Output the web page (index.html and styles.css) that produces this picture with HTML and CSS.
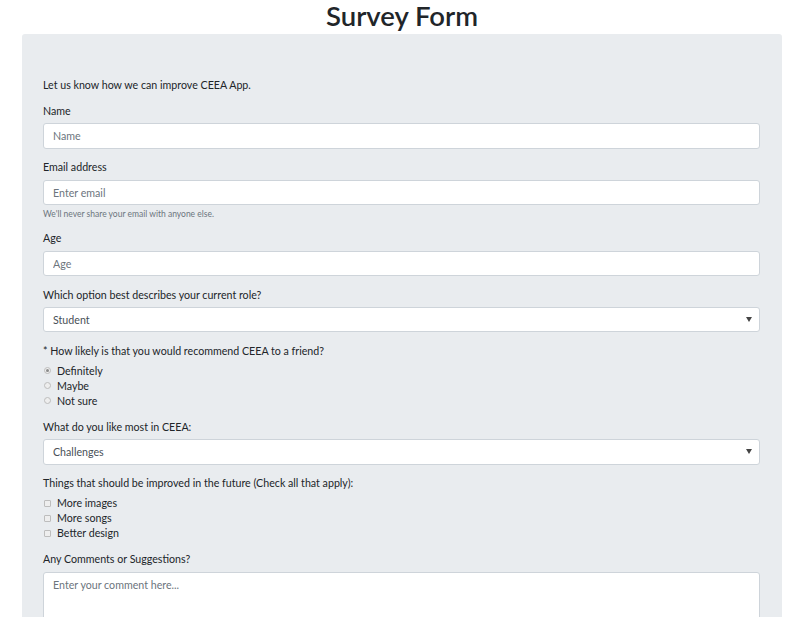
FILE: index.html
```html
<!DOCTYPE html>
<html lang="en">
<head>
<meta charset="utf-8">
<title>Survey Form</title>
<link rel="stylesheet" href="styles.css">
</head>
<body>
<h1 class="title">Survey Form</h1>
<div class="jumbotron">
  <form class="survey">
    <p class="intro">Let us know how we can improve CEEA App.</p>
    <div class="group">
      <label class="lbl" for="name">Name</label>
      <input class="control" id="name" type="text" placeholder="Name">
    </div>
    <div class="group">
      <label class="lbl" for="email">Email address</label>
      <input class="control" id="email" type="email" placeholder="Enter email">
      <small class="help">We'll never share your email with anyone else.</small>
    </div>
    <div class="group">
      <label class="lbl" for="age">Age</label>
      <input class="control" id="age" type="number" placeholder="Age">
    </div>
    <div class="group">
      <label class="lbl" for="role">Which option best describes your current role?</label>
      <div class="select">
        <select class="control" id="role"><option>Student</option></select>
      </div>
    </div>
    <div class="group">
      <label class="lbl">* How likely is that you would recommend CEEA to a friend?</label>
      <div class="checks">
        <label class="check"><input type="radio" name="rec" class="radio" checked><span>Definitely</span></label>
        <label class="check"><input type="radio" name="rec" class="radio"><span>Maybe</span></label>
        <label class="check"><input type="radio" name="rec" class="radio"><span>Not sure</span></label>
      </div>
    </div>
    <div class="group">
      <label class="lbl" for="like">What do you like most in CEEA:</label>
      <div class="select">
        <select class="control" id="like"><option>Challenges</option></select>
      </div>
    </div>
    <div class="group">
      <label class="lbl">Things that should be improved in the future (Check all that apply):</label>
      <div class="checks">
        <label class="check"><input type="checkbox" class="box"><span>More images</span></label>
        <label class="check"><input type="checkbox" class="box"><span>More songs</span></label>
        <label class="check"><input type="checkbox" class="box"><span>Better design</span></label>
      </div>
    </div>
    <div class="group">
      <label class="lbl" for="comment">Any Comments or Suggestions?</label>
      <textarea class="control area" id="comment" placeholder="Enter your comment here..."></textarea>
    </div>
  </form>
</div>
</body>
</html>
```

FILE: styles.css
```css
* { box-sizing: border-box; }
html, body { margin: 0; padding: 0; }
body {
  font-family: "Lato", "Open Sans", sans-serif;
  font-size: 10.67px;
  line-height: 16px;
  color: #212529;
  background: #fff;
  overflow: hidden;
  height: 617px;
}
.title {
  margin: 0 0 2px;
  font-size: 27.5px;
  line-height: 32px;
  font-weight: 600;
  text-align: center;
  color: #212529;
}
.jumbotron {
  margin: 0 22px;
  background: #e9ecef;
  border-radius: 3px;
  padding: 43px 22px 40px 21px;
}
.intro { margin: 0 0 10px; }
.group { margin-bottom: 10.67px; display: flex; flex-direction: column; }
.lbl { display: block; margin-bottom: 4.33px; }
.control {
  display: block;
  width: 100%;
  height: 25.33px;
  padding: 0 9px;
  font-family: inherit;
  font-size: 10.67px;
  color: #495057;
  background: #fff;
  border: 1px solid #ced4da;
  border-radius: 3px;
  outline: none;
}
.control::placeholder { color: #6c757d; opacity: 1; }
.help {
  display: block;
  margin-top: 2.67px;
  font-size: 8.5px;
  line-height: 12px;
  color: #6c757d;
}
.select { position: relative; }
.select select { appearance: none; -webkit-appearance: none; }
.select::after {
  content: "";
  position: absolute;
  right: 8px;
  top: 10px;
  border-left: 3px solid transparent;
  border-right: 3px solid transparent;
  border-top: 5px solid #444;
}
.checks { display: flex; flex-direction: column; }
.check {
  display: flex;
  align-items: center;
  height: 15px;
  padding-left: 1px;
}
.check span { margin-left: 6px; }
.radio, .box {
  appearance: none;
  -webkit-appearance: none;
  margin: 0;
  width: 7px;
  height: 7px;
  border: 1px solid #bdbdbd;
  background: #eeeeee;
  flex: none;
}
.radio { border-radius: 50%; position: relative; }
.radio:checked::after {
  content: "";
  position: absolute;
  left: 1px; top: 1px;
  width: 3px; height: 3px;
  border-radius: 50%;
  background: #8a8a8a;
}
.box { border-radius: 1px; }
.area {
  height: 60px;
  padding: 4px 9px;
  resize: vertical;
  line-height: 16px;
}
```
